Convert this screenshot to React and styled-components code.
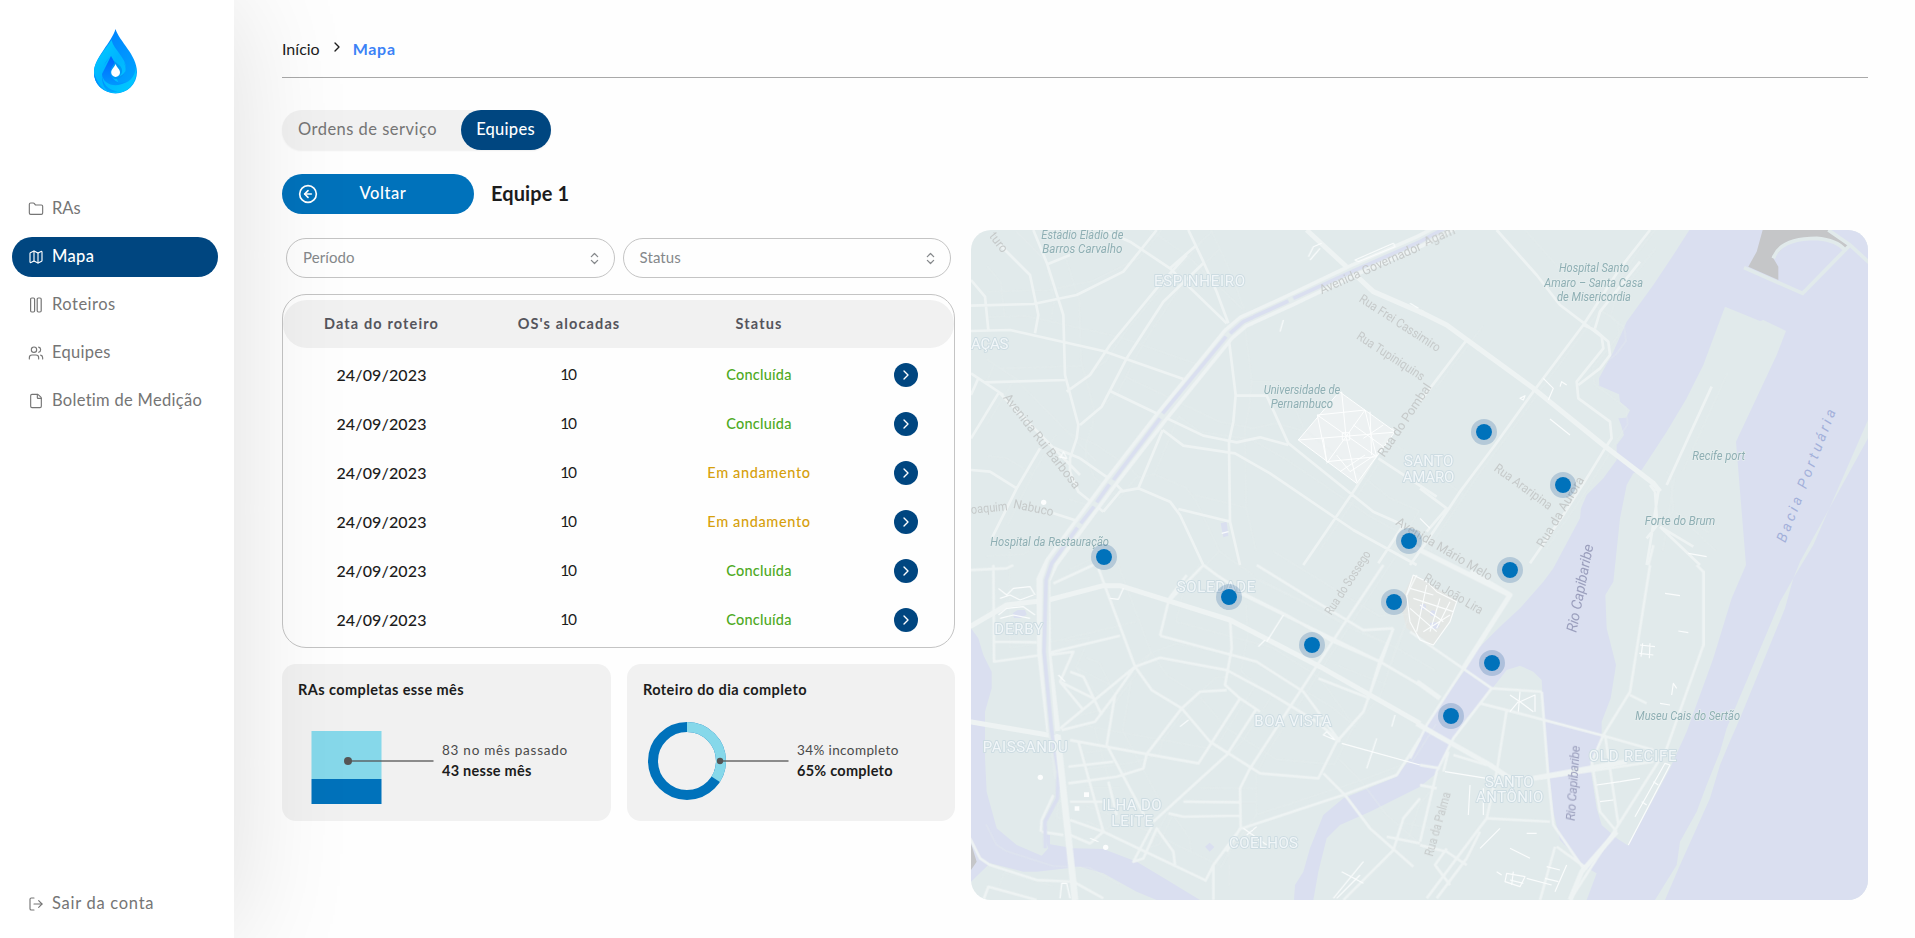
import React from "react";
import styled, { createGlobalStyle } from "styled-components";
import { ChevronRight, ChevronsUpDown, CircleArrowLeft, File, Folder, LogOut, Map as MapIcon, Users } from "lucide-react";

const GlobalStyle = createGlobalStyle`
  *, *::before, *::after { box-sizing: border-box; }
  body {
    margin: 0;
    background: #fefefe;
    color: #1c1c1c;
    font-family: "Lato", "Open Sans", sans-serif;
    font-variant-ligatures: none;
  }
  button { font: inherit; border: 0; padding: 0; background: none; }
`;

const Page = styled.div`
  display: flex;
  width: 100%;
  height: 938px;
  overflow: hidden;
`;

const Sidebar = styled.aside`
  position: relative;
  z-index: 2;
  flex: none;
  display: flex;
  flex-direction: column;
  width: 234px;
  padding: 29px 16px 14px 12px;
  background: #fff;
  box-shadow: 0 0 120px rgba(0, 0, 0, 0.13);
`;

const Logo = styled.svg`
  align-self: center;
  width: 43px;
  height: 65px;
  margin-left: 1px;
`;

const Nav = styled.nav`
  flex: 1;
  display: flex;
  flex-direction: column;
  gap: 8px;
  margin-top: 95px;
`;

const NavItem = styled.a`
  display: flex;
  align-items: center;
  gap: 8px;
  height: 40px;
  padding: 0 16px;
  border-radius: 20px;
  background: ${(p) => (p.$active ? "#004680" : "transparent")};
  color: ${(p) => (p.$active ? "#fff" : "#757575")};
  font-size: 16.5px;
  font-weight: ${(p) => (p.$active ? 500 : 400)};
  letter-spacing: ${(p) => p.$tracking ?? 0.6}px;
  white-space: nowrap;

  svg { flex: none; }
  span { margin-top: -2px; }
`;

const Main = styled.main`
  flex: 1;
  min-width: 0;
  padding: 33px 47px 38px 48px;
`;

const Breadcrumb = styled.div`
  display: flex;
  align-items: center;
  height: 45px;
  padding-bottom: 14px;
  border-bottom: 1px solid #a9a9a9;
  font-size: 16px;

  svg { margin: 0 7px 2px 9px; }
`;

const Crumb = styled.span`
  padding-left: ${(p) => (p.$current ? 1 : 0)}px;
  color: ${(p) => (p.$current ? "#3b82f6" : "#1c1c1c")};
  font-weight: ${(p) => (p.$current ? 700 : 400)};
  letter-spacing: ${(p) => (p.$current ? 0.7 : 0)}px;
`;

const Switcher = styled.div`
  display: inline-flex;
  width: 269px;
  height: 40px;
  margin-top: 32px;
  border-radius: 20px;
  background: #f1f1f1;
  box-shadow: 0 1px 2px rgba(0, 0, 0, 0.06);
`;

const SwitchOption = styled.button`
  flex: ${(p) => (p.$active ? "none" : 1)};
  width: ${(p) => (p.$active ? "90px" : "auto")};
  height: 40px;
  padding: 0 ${(p) => (p.$active ? 1 : 23)}px 2px 0;
  padding-left: ${(p) => (p.$active ? 0 : 15)}px;
  border-radius: 20px;
  background: ${(p) => (p.$active ? "#004680" : "transparent")};
  color: ${(p) => (p.$active ? "#fff" : "#757575")};
  font-size: 16.5px;
  font-weight: ${(p) => (p.$active ? 500 : 400)};
  letter-spacing: ${(p) => (p.$active ? 0.25 : 0.48)}px;
  white-space: nowrap;
`;

const TitleRow = styled.div`
  display: flex;
  align-items: center;
  gap: 17px;
  height: 40px;
  margin-top: 24px;
`;

const BackButton = styled.button`
  display: flex;
  align-items: center;
  width: 192px;
  height: 40px;
  padding: 0 16px;
  border-radius: 20px;
  background: #0072bb;
  color: #fff;
  font-size: 16.5px;
  font-weight: 500;
  letter-spacing: 0.55px;

  span { flex: 1; padding: 0 10px 2px 0; }
`;

const Title = styled.h1`
  margin: 0;
  padding-bottom: 2px;
  font-size: 20px;
  font-weight: 700;
  letter-spacing: 0.1px;
`;

const Columns = styled.div`
  display: flex;
  gap: 16px;
  height: 670px;
  margin-top: 16px;
`;

const Panel = styled.section`
  flex: none;
  display: flex;
  flex-direction: column;
  width: 673px;
`;

const Filters = styled.div`
  display: flex;
  gap: 8px;
  padding: 8px 4px 16px;
`;

const Select = styled.button`
  flex: 1;
  display: flex;
  align-items: center;
  justify-content: space-between;
  height: 40px;
  padding: 0 12px 0 16px;
  border: 1px solid #c4c4c4;
  border-radius: 20px;
  background: #fefefe;
  color: #85888b;
  font-size: 15px;
  letter-spacing: 0.1px;

  span { padding-bottom: 2px; }
`;

const Table = styled.div`
  height: 354px;
  padding-top: 5px;
  border: 1px solid #c4c4c4;
  border-radius: 24px;
`;

const TableRow = styled.div`
  display: grid;
  grid-template-columns: 197px 178px 202px 94px;
  align-items: center;
  justify-items: center;
  height: 49px;

  span { padding-bottom: 2px; }
`;

const TableHead = styled(TableRow)`
  height: 48px;
  margin-bottom: 3px;
  border-radius: 24px;
  background: #f1f1f1;
  color: #55555c;
  font-size: 14.5px;
  font-weight: 700;
  letter-spacing: 1.13px;
`;

const DateCell = styled.span`
  margin-bottom: 1px;
  color: #1c1c1c;
  font-size: 16px;
  font-weight: 500;
  letter-spacing: 0.13px;
`;

const CountCell = styled.span`
  margin: 0 2px 1px 0;
  font-size: 15.5px;
  letter-spacing: -1.2px;
`;

const StatusCell = styled.span`
  color: ${(p) => (p.$done ? "#4eaa24" : "#d6a00c")};
  font-size: 14.5px;
  font-weight: 500;
  letter-spacing: ${(p) => (p.$done ? 0.24 : 0.63)}px;
`;

const RoundButton = styled.button`
  display: grid;
  place-items: center;
  width: 24px;
  height: 24px;
  margin: 0 2px 1px 0;
  border-radius: 50%;
  background: #004680;
  color: #fff;
`;

const Cards = styled.div`
  display: grid;
  grid-template-columns: 329px 328px;
  gap: 16px;
  margin-top: 16px;
`;

const Card = styled.article`
  height: 157px;
  padding: 16px;
  border-radius: 14px;
  background: #f1f1f1;
`;

const CardTitle = styled.h2`
  margin: 0;
  font-size: 14.5px;
  font-weight: 700;
  line-height: 19px;
  letter-spacing: 0.42px;
`;

const CardBody = styled.div`
  display: flex;
  align-items: center;
  height: 92px;
  margin-top: 15px;
`;

const Chart = styled.svg`
  flex: none;
  width: ${(p) => p.$width}px;
  height: 92px;
`;

const Legend = styled.div`
  display: flex;
  flex-direction: column;
  gap: 1px;
  padding-left: ${(p) => p.$gap}px;
  font-size: 14.5px;
  line-height: 20px;
  letter-spacing: 0.25px;
`;

const Muted = styled.span`
  color: #4a4a4a;
  font-size: 13.5px;
  letter-spacing: ${(p) => p.$tracking}px;
`;

const MapFrame = styled.section`
  position: relative;
  flex: 1;
  overflow: hidden;
  border-radius: 20px;
  background: #e1eaeb;
`;

const MapDrawing = styled.svg`
  display: block;
  width: 897px;
  height: 670px;
`;

const Pin = styled.span`
  position: absolute;
  left: ${(p) => p.$x - 13}px;
  top: ${(p) => p.$y - 13}px;
  width: 26px;
  height: 26px;
  border: 5px solid rgba(0, 70, 140, 0.2);
  border-radius: 50%;
  background: #0072bb;
  background-clip: padding-box;
`;

const ColumnsIcon = () => (
  <svg width="16" height="16" viewBox="0 0 16 16" fill="none" stroke="currentColor" strokeWidth="1.2">
    <rect x="2.6" y="1" width="4" height="14" rx="1.2" />
    <rect x="9.2" y="1" width="4" height="14" rx="1.2" />
  </svg>
);

const nav = [
  { label: "RAs", icon: Folder, tracking: 0 },
  { label: "Mapa", icon: MapIcon, active: true, tracking: 0.35 },
  { label: "Roteiros", icon: ColumnsIcon, tracking: 0.5 },
  { label: "Equipes", icon: Users, tracking: 0.3 },
  { label: "Boletim de Medição", icon: File, tracking: 0.3 },
];

const rows = [true, true, false, false, true, true];

const pins = [
  [133, 327], [438.3, 311], [513, 202], [592, 255], [539, 340.3],
  [258, 367], [341, 415], [423, 372], [521, 433], [480, 486],
];

const NW = "translate(0 0)";
const NE = "translate(1350 0)";
const SW = "translate(0 1020)";
const SE = "translate(1350 1020)";

const minor = [
  [NW, "M90 60L180 150L205 270L195 325M3 165L45 215L55 315M3 242L190 237L320 210L460 140L560 15M400 15L480 50L600 130L770 295M190 15L232 118L280 270L285 450L325 600L320 640L300 700L300 740L325 800L400 860M232 118L300 90M655 15L700 110L740 200L775 295M600 130L680 60M700 115L580 230L470 400L395 545L330 600M290 500L360 450L420 360L560 190L650 90M3 318L120 315L400 378L640 462M45 472L285 465M3 445L100 510M25 460L3 510M85 505L3 640M90 505L330 750M420 498L570 570L700 632L800 652L870 637L955 660M578 615L640 662L795 685L900 745L1150 915L1340 1020M578 615L505 790L450 800L400 860M505 790L600 830L630 870L700 1020M625 852L780 890M775 330L797 510L790 590L777 650L780 890L810 1020M797 512L890 512L955 655L1210 860L1300 900M210 670L140 790L65 940M3 735L60 740L140 790M330 700L430 770L460 800M245 665L330 700M250 865L330 890M1225 700L1400 815M1270 610L1157 790L1000 1020M1300 900L1225 1015"],
  [NE, "M230 15L350 150L420 240L545 335L550 370L470 470L475 520L570 590L575 640L555 670M690 15L600 130L490 300L400 420L340 500L225 660L120 800L20 950L-30 1020M490 300L525 315L565 350L570 390L540 430L475 480M525 310L540 260L660 110M140 345L0 530M0 790L80 850L20 920M555 670L500 760L430 870L330 1015M820 965L720 905M705 800L690 780M740 780L875 485M715 800L690 960L680 1020M705 800L712 900L680 940M720 905L840 1020"],
  [SW, "M0 15L110 10L130 0M70 0L72 290L200 272L450 212M72 230L200 232M0 185L110 125M250 55L370 0M385 10L495 305L545 375L635 430L720 530L870 625L1045 640L1100 530L1180 440L1270 190M235 270L310 260L270 350L340 435M270 350L370 400M300 320L340 335L395 450M275 495L375 470L435 390L495 305L270 490M435 390L410 540L530 765M495 305L570 278L770 315L900 385L1040 470L1110 530M570 212L860 290L1000 380L1110 530M570 212L595 110L700 0M860 0L1030 105L1180 195L1270 190M780 160L785 250L765 360L810 400L685 595L530 567L300 525M635 430L530 567L520 610L440 635L295 655M635 430L690 380L770 375M840 610L1120 180L1240 0M840 610L810 670L812 790L730 900L705 950M860 430L770 570L550 770M870 440L810 400M295 605L430 590M325 530L400 800M415 650L440 750M300 710L400 710M640 710L810 712M595 745L640 755L810 752M815 790L1120 690L1280 630L1350 520M300 765L400 800L705 945M400 800L360 835L300 810M545 785L490 890L520 880L560 790L610 860L615 900M800 80L1230 290M1045 340L1200 400M1270 190L1230 285L1195 400M1060 625L1125 690L1200 790L1330 905M1350 700L1300 760L1270 855L1120 1005M1250 815L1350 835M212 800L215 765L250 690M215 800L280 810M40 1005L55 965L200 1005M730 900L730 1005M0 820L30 880L60 900L200 945L310 950L400 1000M590 110L650 30M800 70L740 30L700 0M820 85L950 150L1090 230L1230 290L1350 360M770 860L810 790"],
  [SE, "M-30 200L215 370L100 520L50 620L0 830M215 370L365 380M130 310L20 480L-30 580M365 380L385 640L400 780L490 910M180 415L260 435L550 512L700 555M260 435L230 620L200 760L20 1000M200 760L390 770M360 640L700 590M690 0L630 380L550 510L515 590L540 740L590 800M555 510L595 780M685 0L700 -60M830 0L850 20L850 240L740 550L585 795L450 1005M630 390L680 415M100 570L200 600M85 560L70 620M0 600L60 610M0 660L50 670M180 800L140 880L50 1000M0 840L80 860L140 900M80 850L45 900L90 960M405 845L360 1005M410 845L500 910"],
];

const alleys = minor.slice(0, 3);

const major = [
  [NW, "M1010 15L1140 135L1210 200L1360 265"],
  [NE, "M0 260L80 300L340 490L550 660L700 775L720 800"],
  [SW, "M0 470L265 515M0 185L110 120L235 105L400 62L450 62L780 165L1050 305L1350 475"],
  [SE, "M-10 475L50 510L210 600L270 640M-10 350L60 400M150 20L270 90L-30 -60M270 90L130 310M620 590L340 640M590 800L485 920L450 1005"],
];

const fine = [
  [NW, "M1015 95L1030 65L1055 55M1020 105L1050 70M1155 105L1270 55L1275 65L1165 110ZM930 320L940 285M270 700L280 680L290 700L265 695M755 925L775 920M1320 235L1345 250"],
  [NE, "M370 460L400 490L385 525M300 520L315 512L310 525ZM390 582L450 630M420 485L425 470L440 480M805 985L860 995M0 880L30 910"],
  [SW, "M85 70L110 90L130 70L180 65L195 90M90 100L120 90L150 105L190 90M85 150L110 130L160 125L195 150M90 160L130 150L180 160M420 100L445 103L460 70M890 230L940 150M265 330L285 350M630 485L655 465M1275 450L1265 485M1115 535L1350 600M1220 520L1190 610M1060 510L1095 525L1070 500ZM820 790L890 840M830 810L860 785M360 820L385 830M1090 1000L1180 890M1100 1000L1170 930M1115 920L1180 955M865 245L885 225M1310 90L1340 30M270 1000L275 955L290 955L300 1000"],
  [SE, "M-40 90L-20 30L20 50L50 80L110 110L90 170L40 240L0 225L-30 170ZM-20 100L100 140M0 120L70 170M10 200L90 150M20 60L-10 200M60 100L30 200M90 110L50 190M-30 130L50 200M-30 70L40 90M735 85L780 92M775 198L805 203M660 240L705 245M658 265L700 270M668 235L663 275M690 235L688 280M755 390L760 355L770 370M720 415L750 420M270 390L300 410L345 390L345 440M295 410L270 440M300 410L340 440M300 380L295 440M625 840L750 600L735 595L645 755M665 710L680 720M700 650L715 660M260 925L315 935L300 965L255 950ZM270 945L310 955M280 920L275 960M320 940L395 960M230 920L245 930M380 905L420 915M375 940L415 950M150 660L145 750M190 670L190 750M75 620L200 640M240 790L180 850M270 850L330 880M320 805L350 805M440 900L405 980M530 660L600 650L660 640M540 710L580 705"],
];

const places = [
  [NW, "ESPINHEIRO", 552, 184, 273], [NW, "AÇAS", 3, 372, 112], [NW, "SANTO", 1302, 724, 148], [NW, "AMARO", 1298, 770, 155],
  [SW, "SOLEDADE", 620, 80, 236], [SW, "DERBY", 73, 206, 146], [SW, "PAISSANDU", 38, 560, 255], [SW, "BOA VISTA", 853, 483, 232],
  [SW, "ILHA DO", 397, 735, 178], [SW, "LEITE", 424, 783, 125], [SW, "COELHOS", 777, 849, 207],
  [SE, "SANTO", 195, 665, 146], [SE, "ANTÔNIO", 168, 711, 202], [SE, "OLD RECIFE", 506, 588, 264],
];

const landmarks = [
  [NW, "Estádio Eládio de", 214, 41, 246], [NW, "Barros Carvalho", 217, 83, 240], [NW, "Universidade de", 881, 506, 230],
  [NW, "Pernambuco", 902, 549, 187], [NW, "Hospital da Restauração", 61, 963, 356],
  [NE, "Hospital Santo", 417, 142, 210], [NE, "Amaro – Santa Casa", 373, 185, 296], [NE, "de Misericordia", 411, 228, 222],
  [NE, "Recife port", 817, 705, 158], [NE, "Forte do Brum", 674, 900, 212], [SE, "Museu Cais do Sertão", 646, 465, 314],
];

const streets = [
  [NW, "Avenida Governador", 1055, 208, 330, -24], [NE, "Agam", 18, 64, 98, -23], [NW, "Avenida Rui Barbosa", 98, 518, 350, 52],
  [NW, "oaquim", 4, 867, 110, -6], [NW, "Nabuco", 128, 848, 122, 12], [NW, "Rua Frei Cassimiro", 1165, 228, 282, 33],
  [NW, "Rua Tupiniquins", 1157, 340, 235, 33], [NW, "Rua do Pombal", 1243, 698, 256, -56], [NW, "Avenida Mário Melo", 1275, 898, 330, 31],
  [SE, "Rua João Lira", 8, 46, 200, 31], [NE, "Rua Araripina", 220, 735, 205, 36], [NE, "Rua da Aurora", 370, 970, 240, -59],
  [SW, "Rua do Sossego", 1084, 152, 220, -57], [SE, "Rua da Palma", 38, 876, 198, -74], [NW, "turo", 56, 34, 66, 52],
];

const waters = [
  [NE, "Bacia Portuária", 1096, 955, 424, -69, "#a3b0da", 43],
  [SE, "Rio Capibaribe", 469, 204, 268, -79, "#9b9fbd", 44],
  [SE, "Rio Capibaribe", 464, 768, 226, -86, "#9b9fbd", 38],
];

const Roads = ({ list, ...style }) => (
  <g fill="none" strokeLinejoin="round" {...style}>
    {list.map(([at, d], i) => <path key={i} transform={at} d={d} />)}
  </g>
);

const CityMap = () => (
  <MapDrawing viewBox="3 15 2691 2010" fontFamily="Roboto, sans-serif">
    <g fill="#dadff0">
      <path d="M2158 15L2110 90L2050 180L1970 290L1930 380L1887 460L1888 482L1947 508L1950 530L1980 556L1968 578L1945 580L1953 600L1962 630L1940 660L1940 705L1900 760L1850 810L1833 850L1830 880L1750 1030L1720 1070L1650 1150L1590 1205L1525 1270L1485 1335L1430 1410L1350 1530L1320 1600L1280 1655L1120 1720L1060 1770L1020 1870L1000 1940L975 1980L972 2025H1030L1045 1940L1070 1840L1110 1800L1200 1760L1350 1685L1405 1640L1450 1540L1490 1480L1575 1380L1610 1335L1650 1322L1690 1340L1715 1365L1722 1480L1735 1620L1750 1760L1770 1845L1845 1925L1880 1945L1850 2025H2700V15Z" />
      <path d="M3 1210L25 1240L40 1290L65 1340L65 1390L45 1460V1600L50 1700L80 1810L140 1860L215 1892L235 1870L222 1830H240V1858L310 1870L400 1872L500 1910L600 1970L690 2025H560L500 2000L400 1945L330 1925L200 1940H160L60 1915L3 1970Z" />
      <path d="M128 1165l15-10h22l5 14-18 10h-20zM752 895l18-5 5 42-15 5zM705 1865l14-12 14 13-14 14z" />
    </g>
    <path fill="#e1eaeb" d="M2265 245L2370 288L2380 285L2448 318L2420 390L2298 650L2328 1020L2285 1120L2230 1300L2150 1520L2100 1630L1975 1862L1940 1840L1895 1800L1880 1750L1860 1620L1895 1550V1490L1922 1420L1938 1320L1910 1210L1906 1110L1930 1070L1950 880L1970 780L1990 745L2015 735L2090 620L2150 520L2200 420Z" />
    <path fill="#e1eaeb" d="M2694 585L2530 960L2470 1060L2445 1150L2310 1480L2275 1560L2250 1620L2220 1720L2130 1920L2085 2025H2055L2120 1920L2130 1850L2180 1760L2210 1680L2250 1580L2270 1510L2430 1130L2470 1060L2490 1010L2694 640Z" />
    <path fill="#c5c6c8" d="M2378 15H2575L2638 60L2625 75L2590 50L2540 38L2480 45L2440 65L2410 100L2425 125V165L2335 125L2360 80ZM3 1855L20 1910L3 1935Z" />
    <path fill="none" stroke="#e1eaeb" strokeWidth="11" d="M2322 128L2498 205L2640 60L2700 115M2575 15L2640 60M2410 100Q2430 40 2540 40Q2600 45 2625 75" />
    <path fill="#edf1f2" d="M1108 500L1275 620L1160 775L985 645Z" />
    <path fill="#e4e7e5" d="M1330 1050L1460 1125L1440 1190L1390 1262L1310 1210L1290 1130Z" />
    <path fill="#dadff0" d="M1350 1145a9 9 0 1 0 18 0a9 9 0 1 0-18 0M1380 1165a9 9 0 1 0 18 0a9 9 0 1 0-18 0M1380 1194l18-3 12 12-8 8h-20z" />
    <Roads list={alleys} stroke="#e7eeee" strokeWidth="4" transform="translate(48 -42)" opacity="0.4" />
    <Roads list={minor} stroke="#eef3f3" strokeWidth="8" />
    <Roads list={major} stroke="#eef3f3" strokeWidth="15" />
    <g fill="none" strokeLinejoin="round">
      <path stroke="#eef3f3" strokeWidth="42" d="M1470 -15L1350 48L1140 140L960 226L820 290L775 328L575 575L420 775L320 910L245 1012L220 1065L222 1280L250 1520" />
      <path stroke="#e4eced" strokeWidth="20" d="M1470 -15L1350 48L1140 140L960 226L820 290L775 328L575 575L420 775L320 910L245 1012L228 1065L225 1280L245 1520L262 1660" />
      <path stroke="#dadff0" strokeWidth="11" d="M1470 -15L1350 50L1140 142L970 220M955 228L820 290L780 325M768 335L578 565M570 580L430 765M418 778L380 832M372 845L332 895M322 908L245 1015L228 1065L222 1280L245 1520L265 1640L262 1720L225 1790L226 1870" />
      <path stroke="#eef3f3" strokeWidth="20" d="M262 1530L290 1790L315 2025" />
    </g>
    <Roads list={fine} stroke="#fafcfc" strokeWidth="3.5" />
    <path fill="none" stroke="#fdfefe" strokeWidth="3" d="M1108 500L1275 620L1160 775L985 645ZM1115 500L1128 635L1160 770M1042 570L1185 555L1220 695L1070 710ZM985 645L1270 622M1042 570L1220 695M1185 555L1128 635L1070 715M1060 640L1070 710M1200 560L1205 690M1150 600L1240 665M1180 640L1240 600M1100 690L1140 740L1215 690M1185 690L1110 740M1117 623h22v22h-22z" />
    <g fill="#fcfdfd">
      <circle cx="221" cy="832" r="8" /><circle cx="211" cy="1657" r="8" /><circle cx="407" cy="1867" r="8" />
      <path d="M342 1702h15v14h-15zM314 1744h14v13h-14z" />
    </g>
    <g fontSize="45" fill="#f1f6f8" stroke="#cddce2" strokeWidth="6" strokeLinejoin="round" paintOrder="stroke">
      {places.map(([at, t, x, y, w]) => <text key={t + x} transform={at} x={x} y={y} textLength={w}>{t}</text>)}
    </g>
    <g fontSize="38" fill="#c6caca">
      {streets.map(([at, t, x, y, w, r]) => (
        <text key={t} transform={`${at} translate(${x} ${y}) rotate(${r})`} textLength={w} lengthAdjust="spacingAndGlyphs">{t}</text>
      ))}
    </g>
    <g fontSize="37" fontStyle="italic" fill="#8fafb4" stroke="#e6eeee" strokeWidth="4" paintOrder="stroke">
      {landmarks.map(([at, t, x, y, w]) => <text key={t} transform={at} x={x} y={y} textLength={w} lengthAdjust="spacingAndGlyphs">{t}</text>)}
    </g>
    <g fontStyle="italic">
      {waters.map(([at, t, x, y, w, r, c, s]) => (
        <text key={t + y} transform={`${at} translate(${x} ${y}) rotate(${r})`} fill={c} fontSize={s} textLength={w}>{t}</text>
      ))}
    </g>
  </MapDrawing>
);

const DropLogo = () => (
  <Logo viewBox="0 0 43 65">
    <defs>
      <linearGradient id="dropLight" x1="0" y1="0" x2="1" y2="1"><stop offset="0" stopColor="#00d0ff" /><stop offset=".45" stopColor="#00b4ff" /><stop offset="1" stopColor="#00ccff" /></linearGradient>
      <linearGradient id="dropDark" x1="0" y1="0" x2="1" y2="1"><stop offset="0" stopColor="#007bff" /><stop offset="1" stopColor="#00a8ff" /></linearGradient>
      <linearGradient id="dropInner" x1="0" y1="0" x2="0" y2="1"><stop offset="0" stopColor="#0062ff" /><stop offset="1" stopColor="#00a4ff" /></linearGradient>
    </defs>
    <path fill="url(#dropDark)" d="M21.500 0C25 12 43 26 43 43A21.500 21.500 0 0 1 0 43C0 29 18 13 21.500 0Z" />
    <path fill="url(#dropLight)" d="M17.500 11C20 21 32 29 32 39C32 44 28 48 22 48L25 55C35 55 41 48 42 38C44 53 35 64 22 64C8 64 0 54 0 43C0 31 12 20 17.500 11Z" />
    <path fill="url(#dropInner)" d="M17 27C11 34 8 38 8 45C8 55 14 61 24 62.500C10 65 0 56 0 44C3 54 9 61 15 63C8 58 8 51 8 45C8 38 12 32 17 27L21 34C17 39 16 43 17 46C20 53 27 56 33 52C23 60 9 56 8 45Z" />
    <path fill="#0098f5" d="M17 27C19 32 22 33 25 36C30 40 29 47 22 48C31 47 34 40 30 33C34 44 28 50 22 50C17 50 15 44 18 38L21 34Z" />
    <path fill="#fff" d="M21.500 35C23 39 26 40 26 43.500A4.300 4.300 0 0 1 17.200 43.500C17.200 40 20.500 38.500 21.500 35Z" />
  </Logo>
);

export default function App() {
  return (
    <Page>
      <GlobalStyle />
      <Sidebar>
        <DropLogo />
        <Nav>
          {nav.map(({ label, icon: Icon, active, tracking }) => (
            <NavItem key={label} $active={active} $tracking={tracking}>
              <Icon size={16} strokeWidth={1.7} />
              <span>{label}</span>
            </NavItem>
          ))}
        </Nav>
        <NavItem $tracking={0.72}>
          <LogOut size={16} strokeWidth={1.7} />
          <span>Sair da conta</span>
        </NavItem>
      </Sidebar>
      <Main>
        <Breadcrumb>
          <Crumb>Início</Crumb>
          <ChevronRight size={16} strokeWidth={2} />
          <Crumb $current>Mapa</Crumb>
        </Breadcrumb>
        <Switcher>
          <SwitchOption>Ordens de serviço</SwitchOption>
          <SwitchOption $active>Equipes</SwitchOption>
        </Switcher>
        <TitleRow>
          <BackButton>
            <CircleArrowLeft size={20} strokeWidth={2} />
            <span>Voltar</span>
          </BackButton>
          <Title>Equipe 1</Title>
        </TitleRow>
        <Columns>
          <Panel>
            <Filters>
              <Select><span>Período</span><ChevronsUpDown size={15} strokeWidth={2} /></Select>
              <Select><span>Status</span><ChevronsUpDown size={15} strokeWidth={2} /></Select>
            </Filters>
            <Table>
              <TableHead><span>Data do roteiro</span><span>OS's alocadas</span><span>Status</span><span /></TableHead>
              {rows.map((done, i) => (
                <TableRow key={i}>
                  <DateCell>24/09/2023</DateCell>
                  <CountCell>10</CountCell>
                  <StatusCell $done={done}>{done ? "Concluída" : "Em andamento"}</StatusCell>
                  <RoundButton><ChevronRight size={16} strokeWidth={2} /></RoundButton>
                </TableRow>
              ))}
            </Table>
            <Cards>
              <Card>
                <CardTitle>RAs completas esse mês</CardTitle>
                <CardBody>
                  <Chart $width={136} viewBox="0 0 136 92">
                    <rect x="13.500" y="17" width="70" height="48" fill="#86d8ea" />
                    <rect x="13.500" y="65" width="70" height="25" fill="#0072bb" />
                    <path d="M50 47H135.500" stroke="#555" strokeOpacity=".65" strokeWidth="2" />
                    <circle cx="50" cy="47" r="4" fill="#555" />
                  </Chart>
                  <Legend $gap={8}>
                    <Muted $tracking={0.75}>83 no mês passado</Muted>
                    <strong>43 nesse mês</strong>
                  </Legend>
                </CardBody>
              </Card>
              <Card>
                <CardTitle>Roteiro do dia completo</CardTitle>
                <CardBody>
                  <Chart $width={147} viewBox="0 0 147 92">
                    <g fill="none" strokeWidth="10">
                      <circle cx="44" cy="47" r="34" stroke="#0072bb" />
                      <circle cx="44" cy="47" r="34" stroke="#86d8ea" pathLength="100" strokeDasharray="34 66" transform="rotate(-90 44 47)" />
                    </g>
                    <path d="M77 47H145.500" stroke="#555" strokeOpacity=".65" strokeWidth="2" />
                    <circle cx="77" cy="47" r="3.2" fill="#555" />
                  </Chart>
                  <Legend $gap={7}>
                    <Muted $tracking={0.4}>34% incompleto</Muted>
                    <strong>65% completo</strong>
                  </Legend>
                </CardBody>
              </Card>
            </Cards>
          </Panel>
          <MapFrame>
            <CityMap />
            {pins.map(([x, y]) => <Pin key={`${x}-${y}`} $x={x} $y={y} />)}
          </MapFrame>
        </Columns>
      </Main>
    </Page>
  );
}
